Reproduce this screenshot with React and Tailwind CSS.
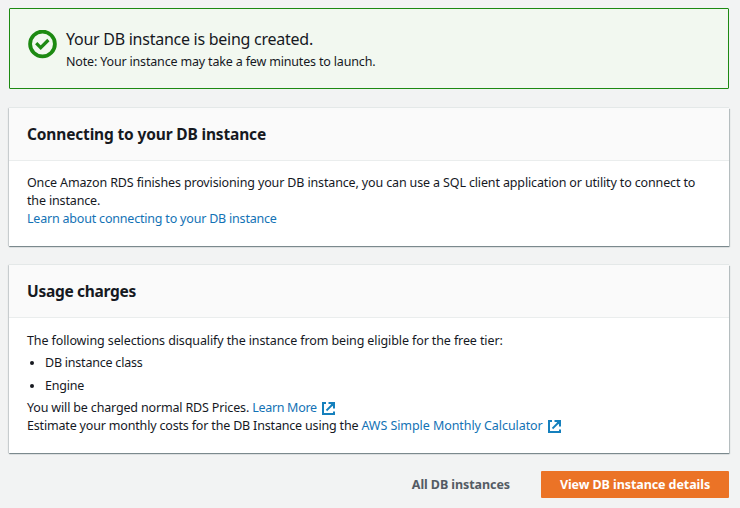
import React from "react";

function ExternalIcon() {
  return (
    <svg className="ml-[5.5px] inline-block h-[13px] w-[13px] align-[-3px]" viewBox="0 0 13 13" fill="none" stroke="#1580bd" strokeWidth="2">
      <path d="M4 1H1v11h11V9.500" />
      <path d="M11 2L4.500 8.500" strokeWidth="1.800" />
      <path d="M6.500 0H13v6.500H11V4.500L8.500 2H6.500z" fill="#1580bd" stroke="none" />
    </svg>
  );
}

function Card({ title, className, children }) {
  return (
    <section className={"bg-white shadow-[0_1px_1px_0_rgba(0,28,36,0.35),1px_1px_1px_0_rgba(0,28,36,0.2),0_-1px_0_0_#e4e8e8,-1px_0_1px_0_rgba(0,28,36,0.12)] " + className}>
      <h2 className="flex h-[53px] items-center border-b border-[#eaeded] bg-[#fafafa] px-[18px] pt-[2px] text-[15.5px] font-bold">{title}</h2>
      <div className="px-[18px] pt-[13px]">{children}</div>
    </section>
  );
}

function Line({ children }) {
  return <p className="h-[18px] whitespace-nowrap leading-[18px]">{children}</p>;
}

export default function App() {
  return (
    <main className="h-[508px] w-[740px] overflow-hidden bg-[#f2f3f3] pl-[9px] pr-[11px] pt-2 font-['Noto_Sans',sans-serif] text-[12.5px] text-[#16191f]">
      <div className="flex h-[81px] rounded-[1px] border border-[#1d8a12] bg-[#f2f8f0] pl-[18px] pt-[19px]">
        <svg className="mt-[2px] h-[29px] w-[29px]" viewBox="0 0 29 29" fill="none" stroke="#1d8a12">
          <circle cx="14.5" cy="14" r="12.4" strokeWidth="3.8" />
          <path d="M8.2 13.2l4.5 4.500L20.4 10" strokeWidth="3.2" />
        </svg>
        <div className="ml-[9px]">
          <p className="h-[25px] whitespace-nowrap text-[16px] leading-[22px] tracking-[-0.26px]">Your DB instance is being created.</p>
          <Line><span className="tracking-[-0.17px]">Note: Your instance may take a few minutes to launch.</span></Line>
        </div>
      </div>

      <Card title={<span className="tracking-[-0.16px]">Connecting to your DB instance</span>} className="mt-[19px] h-[138px]">
        <Line><span className="tracking-[-0.14px]">Once Amazon RDS finishes provisioning your DB instance, you can use a SQL client application or utility to connect to</span></Line>
        <Line><span className="tracking-[-0.15px]">the instance.</span></Line>
        <Line><a className="tracking-[-0.2px] text-[#1372b5]">Learn about connecting to your DB instance</a></Line>
      </Card>

      <Card title={<span className="tracking-[-0.3px]">Usage charges</span>} className="mt-[19px] h-[188px]">
        <div className="pt-px">
          <Line><span className="tracking-[-0.11px]">The following selections disqualify the instance from being eligible for the free tier:</span></Line>
          <ul className="mb-[3px] mt-px list-disc pl-[18px] tracking-[-0.22px]">
            <li className="h-[23px] leading-[23px]">DB instance class</li>
            <li className="h-[22px] leading-[23px]">Engine</li>
          </ul>
          <Line><span className="tracking-[-0.16px]">You will be charged normal RDS Prices. </span><a className="tracking-[-0.3px] text-[#1372b5]">Learn More</a><ExternalIcon /></Line>
          <Line><span className="tracking-[-0.175px]">Estimate your monthly costs for the DB Instance using the </span><a className="tracking-[-0.07px] text-[#1372b5]">AWS Simple Monthly Calculator</a><ExternalIcon /></Line>
        </div>
      </Card>

      <div className="mt-[18px] flex items-center justify-end font-bold tracking-[-0.08px]">
        <button className="mr-[31px] whitespace-nowrap pt-px text-[#545b64]">All DB instances</button>
        <button className="h-[27px] w-[188px] whitespace-nowrap rounded-[1px] bg-[#eb7326] pt-px text-white">View DB instance details</button>
      </div>
    </main>
  );
}
